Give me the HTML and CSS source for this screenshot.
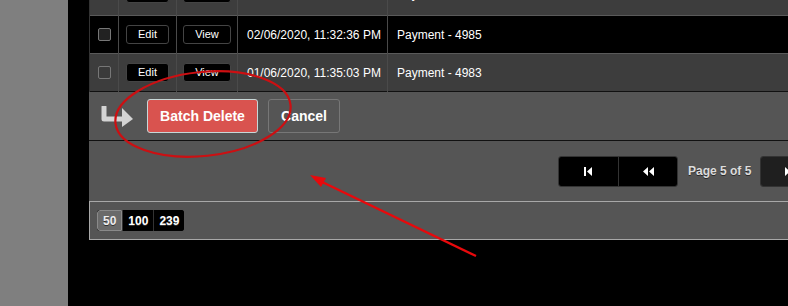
FILE: index.html
```html
<!DOCTYPE html>
<html lang="en">
<head>
    <meta charset="UTF-8">
    <title>Payments</title>
    <link rel="stylesheet" href="styles.css">
</head>
<body>
    <div class="page">
        <div class="sidebar"></div>
        <div class="gutter"></div>

        <div class="panel">
            <table class="grid">
                <colgroup>
                    <col class="w-check">
                    <col class="w-edit">
                    <col class="w-view">
                    <col class="w-date">
                    <col>
                </colgroup>
                <tr class="row-odd">
                    <td class="col-check"><span class="checkbox"></span></td>
                    <td class="col-btn"><button class="row-btn">Edit</button></td>
                    <td class="col-btn"><button class="row-btn">View</button></td>
                    <td>03/06/2020, 09:14:52 PM</td>
                    <td>Payment - 4987</td>
                </tr>
                <tr class="row-even">
                    <td class="col-check"><span class="checkbox"></span></td>
                    <td class="col-btn"><button class="row-btn">Edit</button></td>
                    <td class="col-btn"><button class="row-btn">View</button></td>
                    <td>02/06/2020, 11:32:36 PM</td>
                    <td>Payment - 4985</td>
                </tr>
                <tr class="row-odd">
                    <td class="col-check"><span class="checkbox"></span></td>
                    <td class="col-btn"><button class="row-btn">Edit</button></td>
                    <td class="col-btn"><button class="row-btn">View</button></td>
                    <td>01/06/2020, 11:35:03 PM</td>
                    <td>Payment - 4983</td>
                </tr>
            </table>

            <div class="batch-bar">
                <svg class="batch-arrow" width="34" height="22" viewBox="0 0 34 22">
                    <path d="M4 1 V13 H23" fill="none" stroke="#d4d4d4" stroke-width="5" stroke-linecap="round" stroke-linejoin="round"/>
                    <path d="M22 2 L33 13 L22 21 Z" fill="#d4d4d4"/>
                </svg>
                <button class="btn btn-danger">Batch Delete</button>
                <button class="btn btn-plain">Cancel</button>
            </div>

            <div class="pager">
                <div class="pager-group">
                    <button class="pager-btn">
                        <svg width="9" height="9" viewBox="0 0 9 9"><rect x="0" y="0" width="2" height="9" fill="#fff"/><path d="M8 0 V9 L3 4.5 Z" fill="#fff"/></svg>
                    </button>
                    <button class="pager-btn">
                        <svg width="11" height="9" viewBox="0 0 11 9"><path d="M5 0 V9 L0 4.5 Z M11 0 V9 L6 4.5 Z" fill="#fff"/></svg>
                    </button>
                </div>
                <span class="pager-label">Page 5 of 5</span>
                <div class="pager-group pager-off">
                    <button class="pager-btn">
                        <svg width="11" height="9" viewBox="0 0 11 9"><path d="M0 0 V9 L5 4.5 Z M6 0 V9 L11 4.5 Z" fill="#fff"/></svg>
                    </button>
                    <button class="pager-btn">
                        <svg width="9" height="9" viewBox="0 0 9 9"><path d="M0 0 V9 L5 4.5 Z" fill="#fff"/><rect x="7" y="0" width="2" height="9" fill="#fff"/></svg>
                    </button>
                </div>
            </div>

            <div class="sizes">
                <div class="size-group">
                    <button class="size-btn active">50</button>
                    <button class="size-btn">100</button>
                    <button class="size-btn">239</button>
                </div>
            </div>
        </div>

        <svg class="markup" width="788" height="306" viewBox="0 0 788 306">
            <ellipse cx="203" cy="114" rx="88" ry="42" transform="rotate(-6 203 114)" fill="none" stroke="#cc0f12" stroke-width="2.2"/>
            <line x1="476" y1="256" x2="318" y2="180" stroke="#e8090c" stroke-width="2.4"/>
            <path d="M310 175 L326 178 L321 187 Z" fill="#e8090c"/>
        </svg>
    </div>
</body>
</html>
```

FILE: styles.css
```css
body {
    margin: 0;
    background-color: #000;
    font-family: "Liberation Sans", Arial, sans-serif;
    overflow: hidden;
}

.page {
    position: relative;
    display: flex;
    width: 788px;
    height: 306px;
    overflow: hidden;
}

.sidebar {
    width: 68px;
    flex-shrink: 0;
    background-color: #7f7f7f;
}

.gutter {
    width: 21px;
    flex-shrink: 0;
    background-color: #000;
}

.panel {
    width: 900px;
    flex-shrink: 0;
    align-self: flex-start;
}

/* table rows, first one scrolled half out of view */
.grid {
    margin-top: -23px;
    width: 100%;
    table-layout: fixed;
    border-collapse: collapse;
    color: #fff;
    font-size: 12px;
}

.w-check { width: 29px; }
.w-edit { width: 58px; }
.w-view { width: 61px; }
.w-date { width: 150px; }

.grid tr {
    height: 38px;
    border-top: 1px solid #5a5a5a;
}

.grid tr:first-child td {
    padding-bottom: 6px;
}

.grid tr:last-child {
    border-bottom: 1px solid #111;
}

.row-odd { background-color: #3d3d3d; }
.row-even { background-color: #000; }

.grid td {
    padding: 0 9px;
    border-left: 1px solid #4a4a4a;
    white-space: nowrap;
}

.grid td:first-child {
    border-left: 1px solid #333;
}

.grid td.col-check {
    padding-left: 8px;
    padding-right: 0;
}

.checkbox {
    display: block;
    width: 11px;
    height: 11px;
    border: 1px solid #777;
    border-radius: 2px;
    background-color: #3a3a3a;
}

.row-even .checkbox {
    background-color: #222;
}

.grid td.col-btn {
    padding: 0;
    text-align: center;
}

.row-btn {
    font-family: "Liberation Sans", Arial, sans-serif;
    font-size: 11px;
    color: #fff;
    background-color: #000;
    border: 1px solid #444;
    border-radius: 3px;
    height: 19px;
    padding: 0 11px;
    line-height: 17px;
}

.batch-bar {
    height: 48px;
    background-color: #555;
    border-bottom: 1px solid #111;
    display: flex;
    align-items: center;
    padding-left: 11px;
}

.batch-arrow {
    margin-right: 13px;
    margin-top: 1px;
}

.btn {
    font-family: "Liberation Sans", Arial, sans-serif;
    font-size: 14px;
    font-weight: bold;
    color: #fff;
    height: 34px;
    border-radius: 3px;
    margin-bottom: 1px;
}

.btn-danger {
    width: 111px;
    background-color: #d9534f;
    border: 1px solid #c8d8d8;
}

.btn-plain {
    width: 72px;
    margin-left: 10px;
    background-color: #555;
    border: 1px solid #777;
}

.pager {
    height: 60px;
    background-color: #555;
    display: flex;
    align-items: center;
    padding-left: 469px;
    border-bottom: 1px solid #a8a8a8;
}

.pager-group {
    display: flex;
    height: 29px;
    border-radius: 3px;
    overflow: hidden;
    border: 1px solid #333;
}

.pager-btn {
    width: 59px;
    height: 29px;
    background-color: #000;
    border: none;
    border-left: 1px solid #333;
    display: flex;
    align-items: center;
    justify-content: center;
}

.pager-btn:first-child {
    border-left: none;
}

.pager-off .pager-btn {
    background-color: #1f1f1f;
}

.pager-label {
    font-size: 12px;
    font-weight: bold;
    color: #dcdcdc;
    text-shadow: 0 1px 0 #2a2a2a;
    margin: 0 9px 0 10px;
}

.sizes {
    height: 37px;
    background-color: #555;
    border-left: 1px solid #a8a8a8;
    border-bottom: 1px solid #a8a8a8;
    display: flex;
    align-items: center;
    padding-left: 7px;
}

.size-group {
    display: flex;
    height: 21px;
    border-radius: 3px;
    overflow: hidden;
    background-color: #000;
}

.size-btn {
    font-family: "Liberation Sans", Arial, sans-serif;
    font-size: 12px;
    font-weight: bold;
    color: #fff;
    background-color: #000;
    border: none;
    border-left: 1px solid #333;
    padding: 0 5px;
    text-shadow: 0 1px 0 #333;
}

.size-btn.active {
    background-color: #6a6a6a;
    border: 1px solid #8a8a8a;
    border-radius: 3px 0 0 3px;
    color: #eee;
}

.markup {
    position: absolute;
    left: 0;
    top: 0;
    pointer-events: none;
}
```
